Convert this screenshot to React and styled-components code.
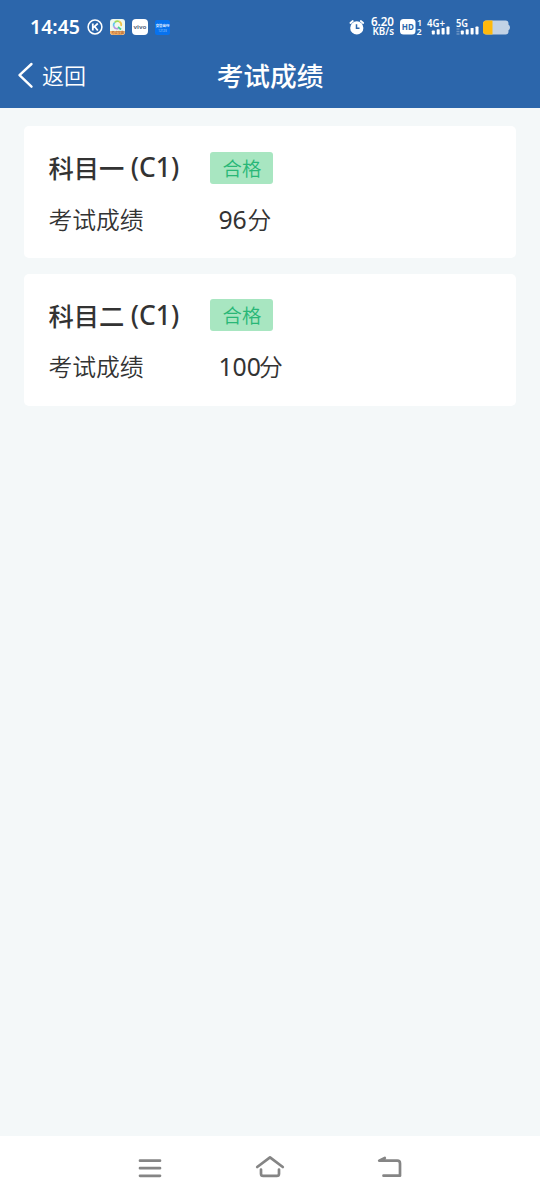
import React from "react";
import styled, { createGlobalStyle } from "styled-components";

const Global = createGlobalStyle`
  * { box-sizing: border-box; }
  body { margin: 0; background: #f4f8f9; font-family: "Noto Sans", "Noto Sans CJK SC", sans-serif; }
`;
const Screen = styled.div`
  width: 540px; height: 1200px; display: flex; flex-direction: column; background: #f4f8f9; overflow: hidden;
`;
const Header = styled.header`
  height: 108px; flex: none; background: #2c66ab; color: #fff;
`;
const StatusBar = styled.div`
  height: 48px; padding: 6px 30px 0; display: flex; align-items: center; justify-content: space-between;
`;
const Group = styled.div`
  display: flex; align-items: center;
`;
const Clock = styled.span`
  width: 50px; margin-right: 7px; font: 600 19.5px/22px "Noto Sans", sans-serif; white-space: nowrap;
`;
const Glyph = styled.svg`
  display: block; flex: none; margin-right: ${(p) => p.$gap || 0}px; overflow: visible;
  text { font-family: "Noto Sans", "Noto Sans CJK SC", sans-serif; }
`;
const Speed = styled.div`
  width: 25px; margin-right: 6px; display: flex; flex-direction: column; align-items: flex-end;
  font: 600 9.8px/10px "Noto Sans", sans-serif; white-space: nowrap;
  span:first-child { font-size: 11.6px; line-height: 10px; }
`;
const NavBar = styled.div`
  height: 56px; padding: 0 18px; display: grid; grid-template-columns: 1fr auto 1fr; align-items: center;
`;
const Back = styled.button`
  display: flex; align-items: center; gap: 9px; padding: 0; border: 0; background: none; color: #fff;
  font: 350 22px/30px "Noto Sans CJK SC", sans-serif;
`;
const BackLabel = styled.span`
  padding-bottom: 4px;
`;
const Title = styled.h1`
  margin: 0; padding-bottom: 2px; font: 500 26.7px/36px "Noto Sans CJK SC", sans-serif;
`;
const List = styled.main`
  flex: 1; padding: 18px 24px; display: flex; flex-direction: column; gap: 15.4px;
`;
const Card = styled.section`
  height: 132.3px; border-radius: 5px; background: #fff; color: #333; padding: 24px 24px 0 24.4px;
`;
const CardHead = styled.div`
  height: 32px; display: grid; grid-template-columns: 162px auto; justify-content: start; align-items: center;
`;
const Subject = styled.h2`
  margin: 0; display: flex; align-items: center; gap: 6.5px; font: 500 25.3px/34px "Noto Sans CJK SC", sans-serif; white-space: nowrap;
`;
const Licence = styled.span`
  font: 500 26.4px/32px "Noto Sans", sans-serif;
`;
const Badge = styled.span`
  width: 63px; height: 32px; margin-top: 1px; border-radius: 3px; background: #a8e6c1; color: #28b777; text-align: center;
  font: 350 19.4px/32px "Noto Sans CJK SC", sans-serif;
`;
const ScoreRow = styled.div`
  margin-top: 18.5px; display: grid; grid-template-columns: 170px auto; justify-content: start; align-items: center;
  font: 350 23.8px/36px "Noto Sans CJK SC", sans-serif;
`;
const Score = styled.span`
  display: flex; align-items: center;
`;
const Points = styled.span`
  margin-right: ${(p) => (p.$wide ? -2 : 0.8)}px;
  font: 400 24.8px/36px "Noto Sans", sans-serif;
`;
const SystemNav = styled.nav`
  height: 64px; flex: none; background: #fff; display: flex; justify-content: center; align-items: center; gap: 90px;
`;

function Bars({ x }) {
  return [0, 1, 2, 3].map((i) => (
    <rect key={i} x={x + i * 4.9} y={13.5 - i * 1.3} width="3" height={4 + i * 1.3} rx=".7" fill="#fff" />
  ));
}

function AppIcons() {
  return (
    <>
      <Glyph $gap={7} width="16" height="16" viewBox="0 0 16 16" fill="none" stroke="#fff">
        <circle cx="8" cy="8" r="6.9" strokeWidth="1.5" />
        <path d="M5.8 4.5v7M10.8 4.5 6.3 8.6M7.6 7.5l3.2 4" strokeWidth="1.8" />
      </Glyph>
      <Glyph $gap={7} width="15" height="16" viewBox="0 0 15 16">
        <rect width="15" height="16" rx="3" fill="#eef8ee" />
        <path d="M0 12h15v1a3 3 0 0 1-3 3H3a3 3 0 0 1-3-3z" fill="#f1b16b" />
        <g fill="none" strokeWidth="1.7">
          <path d="M3.7 7.4a4 4 0 0 1 1.1-4" stroke="#62c7ed" />
          <path d="M4.8 3.4a4 4 0 0 1 4.5-.8" stroke="#a1d95a" />
          <path d="M9.3 2.6a4 4 0 0 1 1.8 4.5" stroke="#f0c247" />
          <path d="M3.7 7.4a4 4 0 0 0 4.5 2.2" stroke="#b692e7" />
          <path d="m8 8 3 2.5" stroke="#42cf91" />
        </g>
        <text x="7.5" y="15.2" fontSize="3.2" fontWeight="700" textAnchor="middle" fill="#ba6d37">考试宝典</text>
      </Glyph>
      <Glyph $gap={7} width="16" height="16" viewBox="0 0 16 16">
        <rect width="16" height="16" rx="4" fill="#fff" />
        <text x="8" y="10" fontSize="5.4" fontWeight="700" textAnchor="middle" textLength="13" lengthAdjust="spacingAndGlyphs" fill="#586a82">vivo</text>
      </Glyph>
      <Glyph width="15" height="15" viewBox="0 0 15 15">
        <rect width="15" height="15" rx="2" fill="#0872ee" />
        <text x="7.5" y="7.3" fontSize="3.4" fontWeight="700" textAnchor="middle" fill="#e5f1ff">交管出行</text>
        <text x="7.5" y="11.6" fontSize="3" textAnchor="middle" fill="#a7d0ff">12123</text>
      </Glyph>
    </>
  );
}

function StatusIcons() {
  return (
    <>
      <Glyph $gap={5} width="16" height="16" viewBox="0 0 16 16">
        <circle cx="8.8" cy="8.9" r="6.6" fill="#fff" />
        <path d="M2.4 4 4.8 2M15.2 4l-2.4-2" stroke="#fff" strokeWidth="1.8" strokeLinecap="round" />
        <path d="M8.5 5.3v4h3" fill="none" stroke="#2c66ab" strokeWidth="1.5" />
      </Glyph>
      <Speed><span>6.20</span><span>KB/s</span></Speed>
      <Glyph $gap={5} width="22" height="20" viewBox="0 0 22 20">
        <rect x="0" y="2" width="15.5" height="15.5" rx="3.5" fill="#fff" />
        <text x="7.8" y="13.2" fontSize="9.5" fontWeight="700" textLength="12" lengthAdjust="spacingAndGlyphs" textAnchor="middle" fill="#2c66ab">HD</text>
        <text x="17" y="8.5" fontSize="9" fontWeight="600" fill="#fff">1</text>
        <text x="16.5" y="17.5" fontSize="9" fontWeight="600" fill="#fff">2</text>
      </Glyph>
      <Glyph $gap={6} width="23" height="20" viewBox="0 0 23 20">
        <text x="0" y="9.5" fontSize="10" fontWeight="600" textLength="18" lengthAdjust="spacingAndGlyphs" fill="#fff">4G+</text>
        <Bars x={4.8} />
      </Glyph>
      <Glyph $gap={5} width="22" height="20" viewBox="0 0 22 20">
        <text x="0" y="9.5" fontSize="10" fontWeight="600" textLength="12" lengthAdjust="spacingAndGlyphs" fill="#fff">5G</text>
        <path d="M.5 12h3M.5 14.5h3M.5 17h3" stroke="#6c95c5" strokeWidth="1.4" />
        <Bars x={4.8} />
      </Glyph>
      <Glyph width="27" height="16" viewBox="0 -1.5 27 16">
        <path d="M3.5 0h19A3 3 0 0 1 25.5 3v1.2Q27 5 27 7t-1.5 2.8V11a3 3 0 0 1-3 3h-19A3.5 3.5 0 0 1 0 10.5v-7A3.5 3.5 0 0 1 3.5 0z" fill="#c2d2e5" />
        <path d="M9.5 0h-6A3.5 3.5 0 0 0 0 3.5v7A3.5 3.5 0 0 0 3.5 14h6z" fill="#ffb90b" />
      </Glyph>
    </>
  );
}

const results = [
  { subject: "科目一", score: 96 },
  { subject: "科目二", score: 100 },
];

export default function App() {
  return (
    <Screen>
      <Global />
      <Header>
        <StatusBar>
          <Group><Clock>14:45</Clock><AppIcons /></Group>
          <Group><StatusIcons /></Group>
        </StatusBar>
        <NavBar>
          <Back>
            <Glyph width="15" height="26" viewBox="0 0 15 26" fill="none" stroke="#fff" strokeWidth="2.4" strokeLinecap="round" strokeLinejoin="round">
              <path d="M13.5 1 1.5 12.2l12 11.5" />
            </Glyph>
            <BackLabel>返回</BackLabel>
          </Back>
          <Title>考试成绩</Title>
        </NavBar>
      </Header>
      <List>
        {results.map((r) => (
          <Card key={r.subject}>
            <CardHead>
              <Subject>{r.subject}<Licence>(C1)</Licence></Subject>
              <Badge>合格</Badge>
            </CardHead>
            <ScoreRow><span>考试成绩</span><Score><Points $wide={r.score >= 100}>{r.score}</Points>分</Score></ScoreRow>
          </Card>
        ))}
      </List>
      <SystemNav>
        <Glyph width="30" height="26" viewBox="0 0 30 26" fill="none" stroke="#858585" strokeWidth="2.7" strokeLinecap="round">
          <path d="M5 5.7h20M5 13.2h20M5 20.8h20" />
        </Glyph>
        <Glyph width="30" height="26" viewBox="0 0 30 26" fill="none" stroke="#858585" strokeWidth="2.7" strokeLinecap="round" strokeLinejoin="round">
          <path d="M2.2 12 15 2.3 27.8 12M6 14.5v4.2q0 2.2 2.2 2.2h13.6q2.2 0 2.2-2.2v-4.2" />
        </Glyph>
        <Glyph width="30" height="26" viewBox="0 0 30 26" fill="none" stroke="#858585" strokeWidth="2.7" strokeLinecap="round" strokeLinejoin="round">
          <path d="M9.8 3 4.2 5.6h18q2.8 0 2.8 2.8v12.3H8.5" />
        </Glyph>
      </SystemNav>
    </Screen>
  );
}
